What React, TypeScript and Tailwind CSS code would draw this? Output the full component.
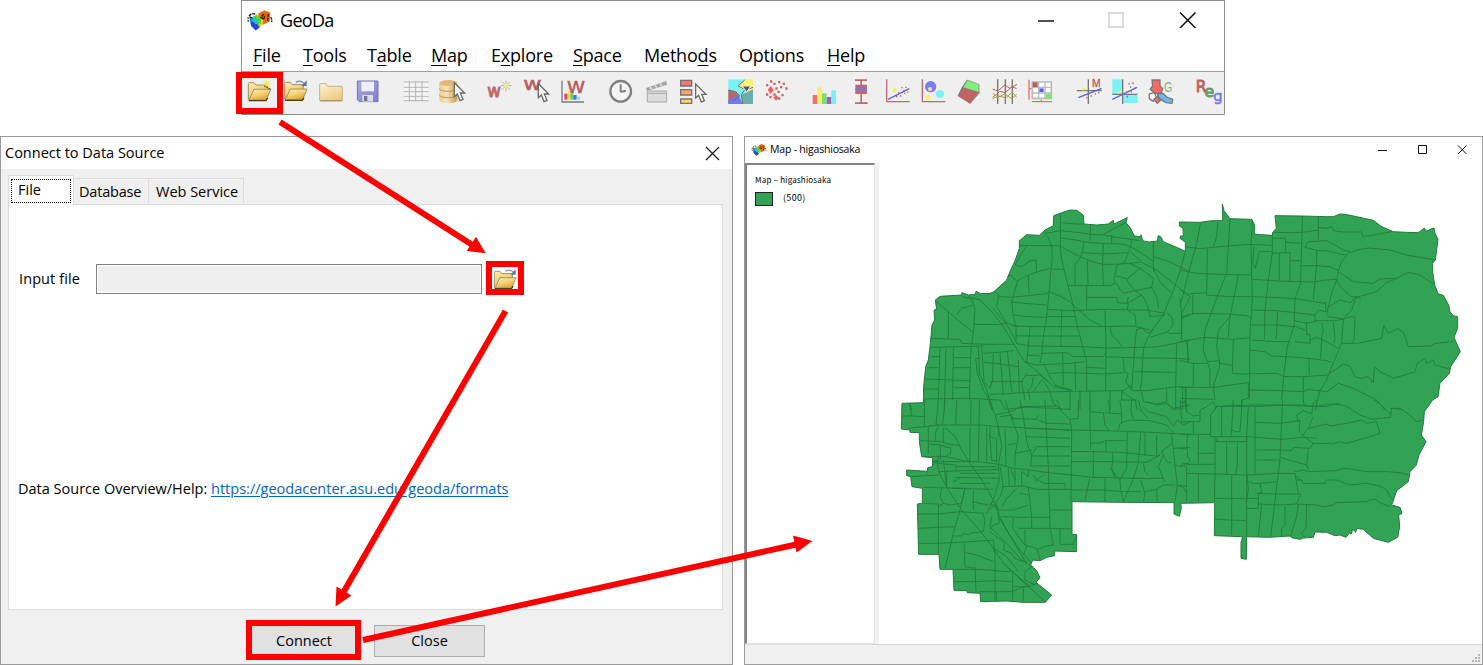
import type { ReactNode } from "react";

const UI = "font-['Open_Sans','Noto_Sans',sans-serif]";

/* ---------- toolbar icons ---------- */

function Cell({ x, children }: { x: number; children: ReactNode }) {
  return (
    <svg className="h-7 w-9 shrink-0" viewBox={`${x} 231 108 84`} aria-hidden="true">
      {children}
    </svg>
  );
}

function Gradients() {
  return (
    <svg className="absolute h-0 w-0" aria-hidden="true">
      <defs>
        <linearGradient id="fold" x1="0" y1="0" x2="0.6" y2="1">
          <stop offset="0" stopColor="#fdf0bb" />
          <stop offset="0.55" stopColor="#f5d274" />
          <stop offset="1" stopColor="#d9a03a" />
        </linearGradient>
        <linearGradient id="foldPale" x1="0" y1="0" x2="0.6" y2="1">
          <stop offset="0" stopColor="#fcf3d0" />
          <stop offset="1" stopColor="#efcb82" />
        </linearGradient>
        <linearGradient id="rain" x1="0" y1="0.6" x2="1" y2="0.3">
          <stop offset="0" stopColor="#2230d8" />
          <stop offset="0.3" stopColor="#18c7e0" />
          <stop offset="0.5" stopColor="#35d435" />
          <stop offset="0.7" stopColor="#f2d21a" />
          <stop offset="1" stopColor="#e0560e" />
        </linearGradient>
        <linearGradient id="disk" x1="0" y1="0" x2="1" y2="1">
          <stop offset="0" stopColor="#a9a9e6" />
          <stop offset="1" stopColor="#7f80c4" />
        </linearGradient>
        <linearGradient id="db" x1="0" y1="0" x2="1" y2="0">
          <stop offset="0" stopColor="#e8cb90" />
          <stop offset="0.4" stopColor="#f6e3b8" />
          <stop offset="1" stopColor="#c79b50" />
        </linearGradient>
      </defs>
    </svg>
  );
}

function FolderShape() {
  return (
    <g strokeLinejoin="round">
      <path d="M4 56V9q0-3 3-3h14l6 7h30q3 0 3 3v40z" fill="url(#fold)" stroke="#a08f62" strokeWidth="3" />
      <path d="M6 58L21 26h50L58 58z" fill="url(#fold)" stroke="#a5906a" strokeWidth="3" />
      <path d="M5 60h52l5-8" fill="none" stroke="#4f3d17" strokeWidth="4" />
    </g>
  );
}

function SwoopArrow() {
  return (
    <g>
      <path d="M38 6q14-8 26 4" fill="none" stroke="#7793b8" strokeWidth="4" />
      <path d="M70 0v17H54z" fill="#58779f" />
    </g>
  );
}

function Cursor({ x, y }: { x: number; y: number }) {
  return (
    <path
      transform={`translate(${x} ${y})`}
      d="M2 0v42l9-8 8 20 9-4-8-19h13z"
      fill="#fbfbfb"
      stroke="#6a6a6a"
      strokeWidth="4"
    />
  );
}

function GeoLogo({ className }: { className: string }) {
  return (
    <svg className={className} viewBox="0 0 78 62" aria-hidden="true">
      <path d="M8 26L34 10 48 28 42 48 26 60 12 46z" fill="url(#rain)" />
      <path d="M34 10L52 0l18 8-2 26-20 10z" fill="#e8690f" />
      <path d="M12 34l16 4 10 14-12 9-14-14z" fill="#2343df" />
      <path d="M18 24l16 2 4 14-14 2z" fill="#23c7c9" />
      <path d="M31 16l12 8-1 18-9-8z" fill="#52cf2d" />
      <path d="M42 22l7 6-2 16-6 2z" fill="#e3d51c" />
      <path d="M6 18q8-10 20-6M1 24h6m0 8H1m7-12l8 4M50 12l-8 10 8 6 4-14M64 12l-2 20M70 22q6 0 4 14" fill="none" stroke="#23180f" strokeWidth="4" strokeDasharray="9 3" />
    </svg>
  );
}

function Toolbar() {
  return (
    <div className="flex h-[42px] items-start gap-3 overflow-hidden bg-[#efefef] pl-[5px] pt-[5px]">
      <div className="flex shrink-0">
        <Cell x={33}>
          <g transform="translate(33 242)">
            <FolderShape />
            <path d="M58-2v26M46 10h26M49 1l18 18M67 1L49 19" stroke="#f2ea49" strokeWidth="3" />
            <path d="M52 16l20 10" stroke="#3b310f" strokeWidth="4" strokeDasharray="4 3" />
          </g>
        </Cell>
        <Cell x={141}>
          <g transform="translate(142 241)">
            <FolderShape />
            <SwoopArrow />
          </g>
        </Cell>
        <Cell x={249}>
          <path d="M251 300v-46q0-3 3-3h16l5 8h40q4 0 4 4v37q0 3-4 3h-61q-3 0-3-3z" fill="url(#foldPale)" stroke="#c2b28c" strokeWidth="3" />
          <path d="M253 302h66" stroke="#a08c66" strokeWidth="3" />
        </Cell>
        <Cell x={357}>
          <path d="M364 243h62v62h-56l-6-6z" fill="url(#disk)" stroke="#7377b5" strokeWidth="3" />
          <path d="M376 245h38v29h-38z" fill="#eeeefc" />
          <path d="M379 285h32v20h-32z" fill="#dcdce6" />
          <path d="M384 288h10v15h-10z" fill="#74748c" />
        </Cell>
      </div>
      <div className="flex shrink-0">
        <Cell x={501}>
          <path d="M504 246h73v56h-73z" fill="#f4f4f4" />
          <path d="M503 246h75M503 262h75M503 275h75M503 289h75M503 302h75M520 243v61M539 243v61M558 243v61" stroke="#b5b5b5" strokeWidth="3" fill="none" />
        </Cell>
        <Cell x={609}>
          <path d="M610 250v50q2 10 27 10t27-10v-50z" fill="url(#db)" />
          <ellipse cx="637" cy="249" rx="27" ry="9" fill="#ddb878" />
          <path d="M610 266q5 8 27 8t27-8M610 285q5 8 27 8t27-8" fill="none" stroke="#b99052" strokeWidth="3" />
          <Cursor x={653} y={248} />
        </Cell>
      </div>
      <div className="flex shrink-0">
        <Cell x={753}>
          <text x="754" y="292" className="font-['DejaVu_Sans',sans-serif] text-[52px]" fill="#bd6a6a" stroke="#bd6a6a" strokeWidth="3" textLength="41" lengthAdjust="spacingAndGlyphs">w</text>
          <path d="M810 241v32M794 257h33M798 245l24 24M822 245l-24 24" stroke="#b9b48a" strokeWidth="3" />
          <circle cx="810" cy="257" r="6" fill="#efefa0" />
        </Cell>
        <Cell x={861}>
          <text x="863" y="269" className="font-['DejaVu_Sans',sans-serif] text-[40px]" fill="#b95c5c" stroke="#b95c5c" strokeWidth="2" textLength="52" lengthAdjust="spacingAndGlyphs">W</text>
          <Cursor x={905} y={251} />
        </Cell>
        <svg className="h-7 w-9 shrink-0" viewBox="-3 231 108 84" aria-hidden="true">
          <path d="M6 242v64h66" fill="none" stroke="#7a7a7a" strokeWidth="4" />
          <path d="M13 281h9v18h-9z" fill="#f36" />
          <path d="M22 274h9v25h-9z" fill="#f0e43c" />
          <path d="M31 280h9v19h-9z" fill="#5ed65a" />
          <path d="M40 285h10v14H40z" fill="#5468f0" />
          <path d="M50 290h10v9H50z" fill="#6cf0f6" />
          <text x="21" y="278" className="font-['DejaVu_Sans',sans-serif] text-[46px]" fill="#b95c5c" stroke="#b95c5c" strokeWidth="1.500" textLength="54" lengthAdjust="spacingAndGlyphs">W</text>
        </svg>
      </div>
      <div className="flex shrink-0">
        <Cell x={141}>
          <circle cx="182" cy="274" r="31" fill="#f4f4f4" stroke="#808080" strokeWidth="7" />
          <path d="M182 253v23M182 276l16-4" stroke="#808080" strokeWidth="6" fill="none" />
        </Cell>
        <Cell x={249}>
          <path d="M262 273h58v33h-58z" fill="#dcdcdc" stroke="#a9a9a9" strokeWidth="3" />
          <path d="M262 280h58" stroke="#a9a9a9" strokeWidth="3" />
          <path d="M258 264l3 9 60-19-2-11z" fill="#a5a5a5" />
          <path d="M270 260l5 8M285 255l5 8M300 251l5 7" stroke="#e8e8e8" strokeWidth="4" />
        </Cell>
        <Cell x={357}>
          <g stroke="#747474" strokeWidth="4">
            <path d="M362 241h33v17h-33z" fill="#f97474" />
            <path d="M362 269h33v16h-33z" fill="#f9a469" />
            <path d="M362 297h33v13h-33z" fill="#f9d96b" />
          </g>
          <Cursor x={405} y={252} />
        </Cell>
      </div>
      <div className="flex shrink-0">
        <Cell x={501}>
          <path d="M505 238h74v74h-74z" fill="#7cf2f6" />
          <path d="M553 238h26v44l-20-10-28-12z" fill="#f8f573" />
          <path d="M505 270l22 6 12 14-12 14-22 8z" fill="#b56a66" />
          <path d="M505 300l30-14 14 26h-44z" fill="#7577f3" />
          <path d="M544 284l35-16v44h-30z" fill="#6fadaa" />
          <path d="M505 270l22 5 12 13-20 14M554 240l-20 18 24 12 21-8M548 312l-4-28 10-14" fill="none" stroke="#6a6a6a" strokeWidth="3" />
          <path d="M547 258h25l-12 19z" fill="#555" stroke="#eee" strokeWidth="3" />
        </Cell>
        <Cell x={609}>
          <g fill="#c06a6a">
            <path d="M630 241h7v7h-7zM654 243h7v7h-7zM640 248h7v7h-7zM668 248h7v7h-7zM618 252h7v7h-7zM660 258h7v7h-7zM676 262h7v7h-7zM646 262h7v7h-7zM652 272h7v7h-7zM640 280h7v7h-7zM664 282h7v7h-7zM618 280h7v7h-7zM628 288h7v7h-7zM654 292h7v7h-7z" />
          </g>
          <path d="M632 258l9 12-9 12-9-12zM648 284l8 9-8 9-8-9z" fill="#f85c5c" />
        </Cell>
      </div>
      <div className="flex shrink-0">
        <Cell x={753}>
          <path d="M758 285h14v27h-14z" fill="#f56c6c" />
          <path d="M772 262h14v50h-14z" fill="#f4f06c" />
          <path d="M786 280h14v32h-14z" fill="#78e06c" />
          <path d="M800 291h14v21h-14z" fill="#8b6cc0" />
          <path d="M814 271h14v41h-14z" fill="#76f0f4" />
        </Cell>
        <Cell x={861}>
          <path d="M885 238h36v5h-15v11h15v28h-15v25h17v5h-38v-5h16v-25h-15v-28h15v-11h-16z" fill="#bd6a6a" />
          <path d="M886 265h35v6h-35z" fill="#7b6cf0" />
        </Cell>
        <Cell x={9}>
          <path d="M20 238v67h69" fill="none" stroke="#bd6a6a" strokeWidth="4" />
          <path d="M24 298L88 266" stroke="#5c62f0" strokeWidth="4" />
          <path d="M38 274l12-6M44 264v14" stroke="#f4ec5c" strokeWidth="5" />
          <path d="M64 263h4M76 262h4M70 271h4M54 279h4M60 288h4M72 280h4M82 276h3M48 290h4" stroke="#bd6060" strokeWidth="4" />
        </Cell>
        <Cell x={117}>
          <path d="M127 238v67h69" fill="none" stroke="#bd6a6a" strokeWidth="4" />
          <circle cx="152" cy="260" r="17" fill="#7c7cf4" />
          <circle cx="150" cy="267" r="6" fill="#f3ef70" />
          <circle cx="180" cy="282" r="12" fill="#78f2f4" />
          <circle cx="144" cy="292" r="8" fill="#f3ef70" />
        </Cell>
        <Cell x={225}>
          <path d="M247 262l52 15-29 34-36-22z" fill="#bd6565" />
          <path d="M262 240l35 14v22l-50-15z" fill="#7ff07c" />
          <path d="M262 240l-28 48 13-27z" fill="#888" stroke="#777" strokeWidth="2" />
          <path d="M299 278l-29 33M297 253v26M262 240l35 13M247 262l50 15" fill="none" stroke="#777" strokeWidth="2" />
        </Cell>
        <Cell x={333}>
          <path d="M353 238v74M376 238v74M397 238v74" stroke="#777" strokeWidth="4" />
          <path d="M338 267l15 6 22-18 14 10 22-12M338 292l22-18 16 4 20-18 14 6" fill="none" stroke="#bd6060" strokeWidth="3" />
          <path d="M338 280l16 12 20-10 22 14 14-14M338 296l18-8 22 6 18-18 14 16" fill="none" stroke="#aba13b" strokeWidth="3" />
        </Cell>
        <Cell x={441}>
          <path d="M447 239v60M447 266h8" stroke="#f86a6a" strokeWidth="4" />
          <path d="M456 305h60M484 299v8" stroke="#f86a6a" strokeWidth="4" />
          <path d="M457 246h57v49h-57z" fill="#fff" stroke="#b9b9b9" strokeWidth="5" />
          <path d="M457 262h57M457 279h57M476 246v49M495 246v49" stroke="#b9b9b9" strokeWidth="4" />
          <path d="M458 247h15v14h-15z" fill="#bd5c5c" />
          <path d="M478 265h13v11h-13z" fill="#5c5cf4" />
          <path d="M498 282h14v12h-14z" fill="#6cf064" />
        </Cell>
      </div>
      <div className="flex shrink-0">
        <Cell x={585}>
          <path d="M625 238v74M590 272h75" stroke="#777" strokeWidth="4" />
          <path d="M595 293l70-28" stroke="#5c62f0" strokeWidth="4" />
          <path d="M606 268h10" stroke="#f4ec5c" strokeWidth="6" />
          <path d="M618 293h4M632 288h4M644 282h4M654 278h4M636 276h4" stroke="#bd6060" strokeWidth="4" />
          <text x="636" y="261" className="font-['Liberation_Sans',sans-serif] text-[31px]" fill="#bd5c5c" stroke="#bd5c5c">M</text>
        </Cell>
        <Cell x={693}>
          <path d="M697 238h30v44h-30zM730 285h43v24h-43z" fill="#7cf2f6" />
          <path d="M728 238v74M697 283h75" stroke="#777" strokeWidth="4" />
          <path d="M697 298l74-36" stroke="#5c62f0" strokeWidth="4" />
          <path d="M712 280l14-8" stroke="#f4ec5c" strokeWidth="5" />
          <path d="M745 252h4M757 250h4M750 261h4M764 264h4M738 276h4M752 276h4M740 290h4" stroke="#bd6060" strokeWidth="5" />
        </Cell>
        <Cell x={801}>
          <g stroke="#777" strokeWidth="4" strokeLinejoin="round">
            <path d="M816 240h24v18l8 8-4 12-18 2-16-12 8-10z" fill="#f86a6a" />
            <path d="M808 282l14-4 8 14-10 12-12-8z" fill="#fff" />
            <path d="M832 282l16-2 14 12 16 6-2 12-18-2-20-12z" fill="#70b5f0" />
            <path d="M822 298l10-8 10 10-10 10z" fill="#f86a6a" />
          </g>
          <text x="852" y="275" className="font-['Liberation_Sans',sans-serif] text-[44px]" fill="#71b877" textLength="25" lengthAdjust="spacingAndGlyphs">G</text>
        </Cell>
      </div>
      <Cell x={945}>
        <g className="font-['DejaVu_Sans',sans-serif]">
          <text x="947" y="275" className="text-[49px]" fill="#bd6565" stroke="#bd6565" strokeWidth="3" textLength="32" lengthAdjust="spacingAndGlyphs">R</text>
          <text x="973" y="291" className="text-[50px]" fill="#6c9c6c" stroke="#6c9c6c" strokeWidth="3" textLength="30" lengthAdjust="spacingAndGlyphs">e</text>
          <text x="1000" y="303" className="text-[44px]" fill="#7c7cf0" stroke="#7c7cf0" strokeWidth="2" textLength="28" lengthAdjust="spacingAndGlyphs">g</text>
        </g>
      </Cell>
    </div>
  );
}

/* ---------- windows ---------- */

const MENU: [string, string, string, string][] = [
  ["", "F", "ile", "w-[50px]"],
  ["", "T", "ools", "w-16"],
  ["T", "a", "ble", "w-16"],
  ["", "M", "ap", "w-[60px]"],
  ["E", "x", "plore", "w-[82px]"],
  ["", "S", "pace", "w-[71px]"],
  ["Metho", "d", "s", "w-[95px]"],
  ["Options", "", "", "w-[88px]"],
  ["", "H", "elp", "w-12"],
];

function MainWindow() {
  return (
    <section className="absolute left-[241px] top-0 h-[115px] w-[984px] overflow-hidden border border-[#8f8f8f] bg-white">
      <header className="flex h-[38px] items-center pl-[5px] pr-[26px]">
        <GeoLogo className="h-[21px] w-[26px]" />
        <h1 className="ml-[7px] flex-1 text-[18px] tracking-[-0.7px]">GeoDa</h1>
        <svg className="h-4 w-[162px]" viewBox="0 0 162 16" fill="none" aria-hidden="true">
          <path d="M2 9h16" stroke="#222" strokeWidth="1.6" />
          <path d="M73 1h14v14H73z" stroke="#ccc" strokeWidth="1.3" />
          <path d="M144 0.5l15.500 15.500M159.500 0.5L144 16" stroke="#111" strokeWidth="1.5" />
        </svg>
      </header>
      <nav className="flex h-[33px] items-center border-b border-[#a0a0a0] pl-[11px] text-[18px] tracking-[-0.2px]">
        {MENU.map(([before, key, after, width]) => (
          <span key={before + key + after} className={`${width} shrink-0 whitespace-nowrap`}>
            {before}
            <span className="underline decoration-1 underline-offset-[3px]">{key}</span>
            {after}
          </span>
        ))}
      </nav>
      <Toolbar />
    </section>
  );
}

function ConnectDialog() {
  return (
    <section className="absolute left-0 top-[136px] flex h-[529px] w-[733px] flex-col border border-[#999] bg-[#f0f0f0] text-[14.500px]">
      <header className="flex h-8 items-center justify-between bg-white pl-1 pr-3">
        <h2>Connect to Data Source</h2>
        <svg className="h-[15px] w-[15px]" viewBox="0 0 15 15" aria-hidden="true">
          <path d="M1 1l13 13M14 1L1 14" stroke="#222" strokeWidth="1.3" />
        </svg>
      </header>
      <div className="flex h-[35px] items-end pl-[7px]">
        <div className="z-10 -mb-px flex h-[30px] w-[66px] border border-b-0 border-[#dcdcdc] bg-white px-[2px] pb-[2px] pt-[3px]">
          <div className="h-6 w-full border border-dotted border-black pl-[6px] leading-5">File</div>
        </div>
        <div className="h-[26px] w-[75px] border-r border-t border-[#dcdcdc] pl-[5px] leading-[26px] tracking-[-0.2px]">Database</div>
        <div className="h-[26px] w-[95px] whitespace-nowrap border-r border-t border-[#dcdcdc] pl-[7px] leading-[26px]">Web Service</div>
      </div>
      <div className="ml-[7px] flex h-[406px] w-[715px] flex-col border border-[#dcdcdc] bg-white">
        <div className="mt-[59px] flex h-[30px] items-center pl-[10px]">
          <span className="-mt-px w-[77px] tracking-[0.1px]">Input file</span>
          <div className="h-[30px] w-[386px] border border-[#828282] bg-[#efefef] shadow-[inset_0_0_0_1px_#fff]" />
          <svg className="ml-[11px] h-[22px] w-6" viewBox="0 -4 74 68" aria-hidden="true">
            <FolderShape />
            <SwoopArrow />
          </svg>
        </div>
        <p className="mt-[184px] whitespace-nowrap pl-[9px]">
          <span className="inline-block w-[193px]">Data Source Overview/Help:</span>
          <span className="tracking-[0.01px] text-[#0066cc] underline underline-offset-2">https://geodacenter.asu.edu/geoda/formats</span>
        </p>
      </div>
      <div className="flex pl-[248px] pt-[15px] text-center leading-[29px]">
        <div className="h-8 w-[110px] border border-[#adadad] bg-[#e1e1e1]">Connect</div>
        <div className="ml-[15px] h-8 w-[111px] border border-[#adadad] bg-[#e1e1e1]">Close</div>
      </div>
    </section>
  );
}

/* Parcel outline and the street network, in thirds of a pixel. */
const CITY =
  "M36 610L100 608 101 560 107 500 115 480 121 430 126 375 134 360 132 330 140 328 136 300 150 289 215 285 216 278 235 285 255 283 258 274 272 281 300 280 312 275 350 240 362 210 376 180 388 145 388 122 410 104 448 106 465 90 490 77 491 47 515 38 540 30 560 31 580 45 582 72 620 75 655 72 670 61 672 72 712 53 708 68 722 85 733 108 753 110 753 104 758 122 775 126 803 123 804 107 812 110 820 125 860 142 886 154 886 127 870 115 872 108 880 108 879 85 868 78 868 66 930 67 965 62 998 62 997 12 1002 32 1020 56 1085 58 1094 75 1094 103 1147 106 1148 97 1159 85 1155 47 1235 48 1310 50 1330 50 1350 42 1365 43 1380 46 1400 50 1450 61 1475 80 1510 95 1550 97 1585 98 1603 84 1610 94 1620 88 1632 84 1635 100 1644 118 1636 180 1628 190 1628 215 1634 255 1645 282 1660 286 1676 315 1680 335 1690 347 1703 350 1703 385 1692 412 1711 455 1682 500 1678 520 1650 550 1644 590 1628 600 1603 635 1601 665 1594 705 1608 725 1587 765 1579 795 1560 815 1555 845 1520 872 1505 915 1530 922 1536 940 1526 945 1529 980 1523 1012 1495 1027 1450 1015 1420 988 1400 985 1397 997 1388 987 1384 1002 1378 1000 1368 1012 1350 1005 1335 1007 1310 997 1275 996 1270 1012 1240 1014 1230 1018 1205 1013 1200 1008 1138 1012 1070 1010 1069 1078 1053 1075 1053 1028 1058 1010 973 1007 974 908 872 910 874 925 868 949 852 942 852 908 700 907 546 905 546 1003 560 1004 560 1055 493 1053 493 1067 470 1072 450 1082 428 1080 422 1095 440 1112 450 1133 438 1147 485 1185 466 1207 400 1207 350 1203 272 1205 270 1180 232 1178 230 1172 192 1171 189 1108 150 1108 147 1063 86 1063 85 1030 82 912 97 910 97 865 66 860 62 830 50 827 50 810 112 814 113 803 127 800 128 773 95 770 88 725 88 698 60 697 60 690 34 687Z";

const NW =
  "M511 38V140M511 68L560 72 582 72M467 100L511 92 570 98 602 103 640 105 680 112 750 122M602 75L600 122M511 114L560 120 580 125 640 131 700 132 733 146 760 163 790 185V215M640 103L680 82 710 66M665 105V130M725 121L720 146M388 137H510M465 98L478 120 485 139 487 175 483 205 478 270 470 350 460 410 455 460 450 490M510 139L515 180 530 240 548 310 560 370 578 440 590 482M410 139L395 160 375 195 395 200 420 182 438 180 440 214M380 245L400 232 440 216 480 205M483 208H520M415 228L417 280M350 232L362 225 382 245 372 280 365 305 370 350 378 380 378 425 385 433M312 275L330 290 365 292 415 287 475 280M326 285L320 320 335 345 350 368 378 378M365 306L400 310 470 315M370 345L410 350 467 352M470 328L550 332 640 328 732 330 770 330 825 340M475 275L510 288 540 305 560 325 600 360 635 378M365 378L455 380 640 380 730 378 760 385 780 390M378 408H570M378 430L420 438 580 440 645 444 720 443 800 441 855 430 900 420M515 332L513 440M468 350H555M420 380L415 440 410 490M511 139L550 160 600 183 640 193 680 193 750 187M555 255V195L570 175 578 150 582 125M592 180L594 255M640 131L638 193 640 258M578 158L640 162 715 158M535 257H660L675 250M590 257V327M590 292H680L682 308 712 310 715 290M645 330L648 444 647 570M715 158L705 185 680 197 672 240 690 268 700 280 735 272M680 228L712 237 750 205 790 235 785 262 735 272 712 245V237M735 272L760 290 775 325 780 350 825 345M785 262L800 290 806 325M750 205L720 190M715 310L712 330 735 345 738 375M712 310L755 285M790 125V185M790 170L830 182 900 215M790 205L810 245 845 280M715 150L760 190 800 210 850 250 900 290M886 154L870 215 850 270 820 345 790 385 770 420 760 450 755 540 750 572M738 390L755 383 775 400 790 388M830 340L845 350 850 370 835 395 780 412M740 388L735 430 730 500 725 570M660 380L665 405 690 430 697 440M900 290L885 320 875 340V420M835 400H875M875 355L900 345M890 420L895 485M860 430L857 560M137 303L175 335 215 370 250 397M200 345L215 325 250 315M235 290L270 300 310 340 340 380 370 430 400 480 460 530 490 560 545 572M220 290L245 298 255 325 252 375 245 435M250 373H325L350 370M310 325L325 345 350 372 378 425M175 335V415M122 415L210 418 215 430 290 433 375 433M122 442L280 438M150 442L145 600M168 442L163 630M190 442L188 600M243 440L238 600M122 470H148M190 473H240M115 503H145M190 503H240M105 537L240 542M190 563H240M103 567H145M100 597L240 595 330 600 345 628M257 475L262 520 280 570 300 600 305 630M265 440L268 520 290 570 310 630M257 475H270M275 440L282 545 300 565M280 460L325 457 370 452M310 460L308 540 300 563M330 460L340 585M352 455L365 575M385 480L388 580M282 487L330 492 385 500M300 545H400M300 583L340 582 390 578 545 574 700 572M410 465L450 468M400 485L440 495 540 490 585 485M455 460L530 458 550 470 640 470 648 455M648 470L720 473 860 475 900 478M460 490L480 530 495 555 545 570M518 458L520 555M480 520L520 518 645 522 700 518M555 485L557 570M590 482V572M590 502L645 505M700 472L703 515 715 520 708 545 725 570M735 515L857 517M725 572H770L860 560 900 562M725 555L695 575 710 585 735 600 742 630M410 520L395 545 405 600M430 530L425 560 415 570 420 600M460 540L480 575 490 610 515 630M410 527L450 525 475 545M460 535L440 560 430 575M570 572V630M540 572V630M600 572V630M660 572V630M755 575L760 605 800 612 830 605V565M857 560V625M886 565V615M830 610L850 625 900 615M385 620L490 625 540 628M695 575V600L740 600M60 610L65 630M345 628L420 620";

const NE =
  "M62 67L50 130 20 240 0 320M113 66L110 110 100 142M150 56L140 220 100 320 75 390 70 450 90 510V560M15 140L60 146 140 138 210 133 275 136M82 146L80 285M0 210L35 218 80 222 215 225M0 268L20 282 80 278M80 285L150 290 215 290M175 225L162 290 150 350 115 390 110 440 120 495 100 560 105 600M38 285V345M5 350L40 340 150 342 205 348 215 358M0 290L5 345V420M150 342L145 412M0 425L75 412 160 418 210 413M22 422L24 485M0 482L40 490 80 490M82 485L118 482 120 490 158 496M40 490V560M160 418L157 520 175 522 290 520M0 562L100 562 205 548M217 58L213 140 217 300 210 400 208 600M222 140L218 190 226 205 238 155 275 155M277 106V158L265 240 255 330 253 418M275 97L340 98 368 97M275 115H317V158L275 160M298 160V240M317 127L368 130M317 158H330V245M368 48L365 130 362 250 345 295 343 375 322 440 312 520 305 600M415 50V118M368 97L415 90M415 83L445 85 455 78 460 92 490 96 545 96 548 110 580 105 635 95M375 142L385 125 440 122 470 138 490 150 510 155M375 142L415 152 440 152 480 162 500 165M510 160L530 150 565 144 630 150 680 165 765 180M330 182H365M410 152V195L405 245M365 197L410 197 450 200 475 212M510 155L485 185 475 212 470 240 480 260 512 288 530 292M217 238L300 243 400 246 440 240 470 238M475 215L520 245 580 250 600 237 650 235 685 217 720 225 760 252M530 292L590 275 620 248 650 235M470 240L455 280 445 320M405 245L400 300M215 290L300 293 345 296 435 310M215 330L290 332 345 338 405 345 415 330 437 335V305M445 320L480 300 510 308 528 290 545 297M528 292L515 330 490 357 445 350 440 340 445 320M490 357L515 350 525 352 522 420 515 430M490 357L485 430 455 500 440 540 420 572 405 630M343 362L380 370 405 365V345M405 362L465 362 490 357M380 368V405L390 402V430L345 425M215 375L290 375 343 380M293 335L288 418M215 420L290 425 330 425M343 378L380 392M425 368L430 395 425 410 422 475M460 365L465 420 460 430M390 420L410 412 440 425 475 445M210 450L255 455 275 468 320 470 385 475 440 482 455 487M387 475L388 525M485 430L530 430 605 415 612 375 625 400 655 385 672 400 685 440 755 438 765 430 820 425M450 520L490 492 510 500 525 530 545 535 565 530 580 548 583 500 600 515 640 535 690 520 705 515 712 490 735 475 740 490 760 480 765 495 800 505 812 503M290 520L315 530 370 530 445 525M205 570L300 572 370 575 385 568 440 575 475 550 520 565 560 585 590 600 615 630M370 530V605M205 548V595L185 600V620M0 595L100 598M8 562V630M18 562V630M0 605L20 610M105 630V620L200 618M205 615L300 615 370 618 400 620 450 612 480 615M630 625L665 628";

const SW =
  "M58 10L65 48 103 50M37 48H65M103 0V80M55 85L103 80 145 75 270 75 330 80 400 83 540 90M145 0L138 75 145 75M165 0L158 75M200 0L197 75M243 0L242 75M268 0L265 185M295 0L315 45 325 80 335 140 325 195 328 240 310 300 290 340M345 0L360 45 375 80 385 110 375 165V200M315 45L360 35 395 20 500 18M390 0L400 50 405 85 410 125 425 165 422 200M365 55L440 58 445 45M465 0L470 110 475 200 480 385M330 50L365 45 370 60M500 0L515 35 540 58 565 55M445 60L470 70 540 72M540 58L545 90 543 305M565 0V55M600 0V90L602 95M655 0L660 40M600 35L640 38 645 75 658 92M645 38L695 42 690 0M695 42V70M405 85L540 90 680 93 780 97 900 103M725 0L722 30 730 58M745 0L755 35 775 55M760 20L775 35 830 50 850 80 862 60 880 75 900 65M770 5L800 15 830 10 850 30 875 25M685 90L690 70 720 60 780 62 830 75 850 98M145 80L135 100 138 125M165 82L195 110 215 150 240 190 275 240 310 300 330 350 350 390 385 450 410 490M115 80V160M88 122L160 125 165 130 210 137M160 83V130M120 132L150 135 165 138V142H182V160L165 170M100 170L165 170 240 185M145 165V180L128 185H270M150 137L152 180M240 82V185M268 185L325 193 370 205 420 210 475 218 545 225 610 232 740 235M290 82V185M298 100L305 180 320 185V115L300 110V80M325 80V110M345 85L348 200M352 135L380 130M408 110L470 112 540 115M425 165L440 140 540 140M375 160L425 150M425 168H540M422 198H540M545 155L610 155 690 157 800 168 810 165M602 97V150M602 130L635 128 645 122H710M545 185H660L770 187M610 155V235M648 123V155M712 97L710 205M668 158V185L665 205 675 235M752 97L745 190 725 250 700 305M765 97V168M800 105V165M845 100L850 145 855 195 862 255 855 305M850 145L900 143M770 187L810 165M760 190L765 215 775 225M820 165L805 200 820 235 825 245M845 130L815 155 830 185 845 190M850 195L875 200 880 190 900 195M730 235H820M660 205L690 240 692 270 700 305M710 205L690 240M545 270L640 270 700 275 755 275M600 232L585 300M645 235V305M752 240L765 280 760 305M765 275L800 268 820 255 855 255M860 255L880 262 890 280M800 268L802 305M117 205L140 185 150 225 175 270 215 330 260 380 300 430 340 490 385 530 420 560M62 230L145 225M110 200V225M160 180L170 260M145 215L325 208M140 190L198 195V210M198 200H320M195 232L325 235M210 220H320M190 245L210 235M210 250H300M185 265L310 268M100 262L230 265M170 210V260M330 200L340 260 330 290 300 330M355 205L358 260M362 208L375 240M375 210V260M395 213V260M415 210V230L398 215M430 225L440 240 465 250 525 250V265M435 245L460 225M335 260L400 258 440 268 545 268M415 262L425 350V385M388 280L415 285M380 265L350 295 335 320M155 265L150 290 160 310 145 320M225 265L215 310 180 315 160 310M225 265L210 330 190 400 165 505M250 270V330M245 305L295 315M100 310L145 312V460M82 342H145L210 335 280 340M85 385L145 382 195 380M85 430L145 430 240 425 310 420M278 340L285 360 280 395 240 400 235 405 220 400 215 408H190M300 310L330 330 370 330 415 315M320 310L328 370 310 375 300 390M335 350L385 352 480 352M370 355L368 385 400 430 410 440 400 465M385 385L480 385 545 387M405 390V435L440 445 450 480M480 385L490 435 460 440 440 450M510 387V433H550L560 405M480 330H545M325 350L350 390 390 450 425 490M305 350L300 380 350 430 395 480 425 500M310 420L315 470V600M300 395L345 430 340 450 365 460 375 475 400 485M222 430L225 500M225 458L260 465 310 485M190 508L255 508 300 510 350 515 365 512M255 500L258 575M225 500L255 505M190 545H260L320 542 365 545M368 515V605M270 575H365L400 560M400 560V605M320 575V605M340 490L415 560 466 605M425 500L405 515V540L435 555M418 560L440 550M368 560H418M305 440L350 470 385 515";

const SE =
  "M15 0L20 35 40 48 60 45 60 30 80 20 100 5 105 15M0 65H60V45M40 65V100M0 103L90 103 93 110H200L305 118 370 112 410 115M0 145L20 148 22 105M55 105V160H105M0 195L15 200 15 190 25 190 30 180 22 170V148M25 193L105 193M20 220L105 222 200 225 290 220 345 220M55 160V190M55 222V305M20 200V305M105 110V225L103 305M115 15L92 45V110M120 20L155 15 205 18 225 20 305 15 370 15 410 20 440 20 470 10 500 20 540 45 575 57 630 52 635 25 660 25 690 45 710 65 730 60M125 20V110M160 0L155 90 165 95H180L185 20M185 0V20M155 90L152 110M205 18L200 110 200 210 205 270 198 310M225 20V220M228 67L300 70 360 62M308 0L303 110 300 180 290 260 283 320 272 410M355 65L350 45 370 32 395 42 400 10 410 0M360 62L358 95 368 105 385 85 400 50M385 85L440 72 450 78 500 70 545 60 560 70 590 65 600 100 570 110 500 130 480 125 460 132 440 130 400 130 380 115 365 105M582 0L600 12 635 45M110 125H200V110M110 115V125M140 128V222M172 128V190L168 222M230 150H305L335 152 340 142 390 145 400 130M230 180H300M300 172L380 195 385 145M380 195L385 210M155 225V405M200 225V295H105M205 245L220 250 240 250 290 245M240 250L245 275 235 280V325H200M230 280L290 282 362 282 350 310M200 295H235M345 220L355 280M345 215L370 210 385 215 470 212 490 205 520 208 560 215 620 215 660 218 685 225M350 240L365 240 370 250 435 250 440 240 470 240 510 255 560 250 600 258 620 270 630 290 640 300M235 312L300 315 350 312 410 315 430 320 460 315 465 308 560 305 570 300 585 298 600 308 630 320M105 358L200 362M200 295V410M245 315L235 410M315 318V375L305 385V410M355 312L350 350 332 408M380 312L378 385 365 400 375 415M0 255L20 260M370 0L372 15M0 0L5 60M345 225L362 240";

function MapWindow() {
  return (
    <section className="absolute left-[744px] top-[136px] flex h-[529px] w-[739px] flex-col border border-[#9b9b9b] bg-[#f0f0f0]">
      <header className="flex h-[26px] items-center bg-white pl-[6px] pr-[14px]">
        <GeoLogo className="h-3 w-4" />
        <h2 className="ml-[3px] flex-1 text-[10.500px] tracking-[-0.2px]">Map - higashiosaka</h2>
        <svg className="h-3 w-[90px]" viewBox="0 0 90 12" fill="none" stroke="#111" aria-hidden="true">
          <path d="M0 6.500h9" />
          <path d="M40.500 1.500h8v8h-8z" />
          <path d="M80 1.500l8.500 8.500M88.500 1.500L80 10" />
        </svg>
      </header>
      <div className="flex h-[481px]">
        <aside className="w-[130px] border-l-2 border-t-2 border-[#848484] border-r border-r-[#e3e3e3] border-b border-b-[#e3e3e3] bg-white pl-[8px] pt-[9px] font-['Noto_Sans_CJK_JP',sans-serif] text-[8px]">
          <p className="h-3 whitespace-nowrap leading-3 tracking-[0.2px]">Map − higashiosaka</p>
          <div className="mt-[4px] flex items-center">
            <span className="mt-[2px] h-[14px] w-[18px] border border-[#222] bg-[#32a354]" />
            <span className="-mt-px ml-[10px] text-[9px] leading-3 tracking-[0.3px]">(500)</span>
          </div>
        </aside>
        <div className="w-[4px] bg-[#f0f0f0]" />
        <div className="flex-1 bg-white">
          <svg className="h-[481px] w-[603px]" viewBox="-33 -111 1809 1443" aria-hidden="true">
            <clipPath id="city">
              <path d={CITY} />
            </clipPath>
            <path d={CITY} fill="#32a354" />
            <g clipPath="url(#city)" fill="none" stroke="#217b3d" strokeWidth="2.600">
              <path d={NW} />
              <path d={NE} transform="translate(870 0)" />
              <path d={SW} transform="translate(0 600)" />
              <path d={SE} transform="translate(870 600)" />
            </g>
            <path d={CITY} fill="none" stroke="#207a3c" strokeWidth="3" />
          </svg>
        </div>
      </div>
      <footer className="flex flex-1 items-end justify-end border-t border-[#dadada] pb-[2px] pr-[2px]">
        <svg className="h-2 w-2" viewBox="0 0 8 8" fill="#b5b5b5" aria-hidden="true">
          <path d="M6 0h2v2H6zM3 3h2v2H3zM6 3h2v2H6zM0 6h2v2H0zM3 6h2v2H3zM6 6h2v2H6z" />
        </svg>
      </footer>
    </section>
  );
}

function Annotations() {
  return (
    <svg className="pointer-events-none absolute left-0 top-0 h-[665px] w-[1483px]" viewBox="0 0 1483 665" fill="none" aria-hidden="true">
      <g stroke="#f00" strokeWidth="6">
        <path d="M239 75h41v36h-41z" />
        <path d="M489 264h32v28h-32z" />
        <path d="M249 623h109v34H249z" />
        <path d="M280 122L474 246M505.500 311L343 593M363 640L796 544.500" />
      </g>
      <path d="M485.700 253.300L476 236.700 466.700 251zM335.500 606.500L336.500 586.500 351.500 595.500zM812.500 541L793 535.500 796.500 552.500z" fill="#f00" />
    </svg>
  );
}

export default function App() {
  return (
    <main className={`relative h-[665px] w-[1483px] overflow-hidden bg-white text-black ${UI}`}>
      <Gradients />
      <MainWindow />
      <ConnectDialog />
      <MapWindow />
      <Annotations />
    </main>
  );
}
